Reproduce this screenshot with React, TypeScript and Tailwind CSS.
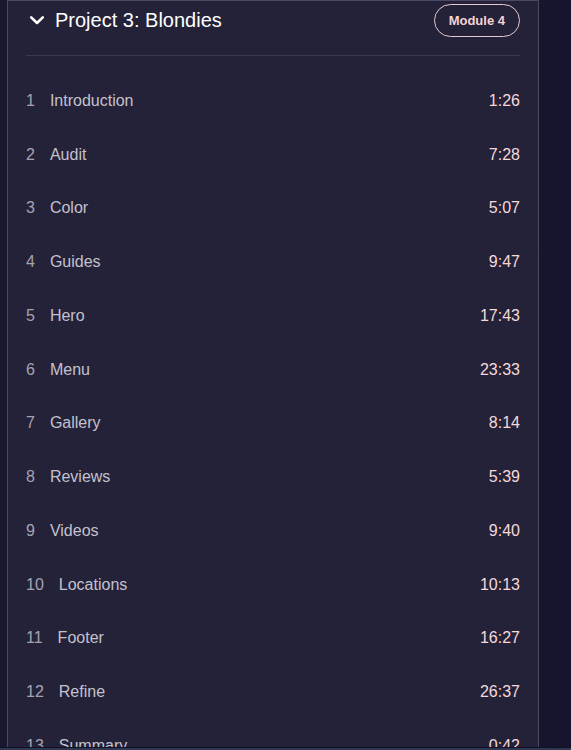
import React from 'react';

interface Lesson {
  num: number;
  title: string;
  time: string;
}

const lessons: Lesson[] = [
  { num: 1, title: 'Introduction', time: '1:26' },
  { num: 2, title: 'Audit', time: '7:28' },
  { num: 3, title: 'Color', time: '5:07' },
  { num: 4, title: 'Guides', time: '9:47' },
  { num: 5, title: 'Hero', time: '17:43' },
  { num: 6, title: 'Menu', time: '23:33' },
  { num: 7, title: 'Gallery', time: '8:14' },
  { num: 8, title: 'Reviews', time: '5:39' },
  { num: 9, title: 'Videos', time: '9:40' },
  { num: 10, title: 'Locations', time: '10:13' },
  { num: 11, title: 'Footer', time: '16:27' },
  { num: 12, title: 'Refine', time: '26:37' },
  { num: 13, title: 'Summary', time: '0:42' },
  { num: 14, title: 'Launch', time: '3:12' },
];

const App: React.FC = () => {
  return (
    <div className="h-[750px] flex flex-col overflow-hidden bg-gradient-to-r from-[#1a1831] via-[#1b1932] to-[#17152d] font-['Liberation_Sans',Arial,sans-serif]">
      <div className="flex-1 overflow-hidden pl-[7px] pr-[32px]">
        <div className="border-x border-t border-[#4b4962] bg-[#242239] px-[18px] pt-[3px]">
          {/* Module header */}
          <div className="flex items-center justify-between h-[33px]">
            <div className="flex items-center -mt-[2px]">
              <svg width="16" height="11" viewBox="0 0 16 11" className="ml-[3px] mt-[1px]" fill="none">
                <path d="M2.2 2.4 L8 8 L13.8 2.4" stroke="#ffffff" strokeWidth="2.6" strokeLinecap="round" strokeLinejoin="round" />
              </svg>
              <h2 className="ml-[10px] text-[20px] leading-none text-white">Project 3: Blondies</h2>
            </div>
            <span className="h-[33px] flex items-center rounded-full border border-[#e9c9cb] px-[14px] text-[13px] font-bold text-[#f3d4d6]">
              Module 4
            </span>
          </div>
          <div className="mt-[18px] border-t border-[#3b394f]" />

          {/* Lesson list */}
          <ul className="pt-[18px]">
            {lessons.map((l) => (
              <li key={l.num} className="h-[53.75px] flex items-center justify-between text-[16px]">
                <div className="flex items-center">
                  <span className="text-[#a4a2b2]">{l.num}</span>
                  <span className="ml-[15px] text-[#c3c1cd]">{l.title}</span>
                </div>
                <span className="text-[#f6d8d9]">{l.time}</span>
              </li>
            ))}
          </ul>
        </div>
      </div>
      <div className="h-[1px] bg-[#121026]" />
      <div className="h-[2px] bg-[#2e3850]" />
    </div>
  );
};

export default App;
